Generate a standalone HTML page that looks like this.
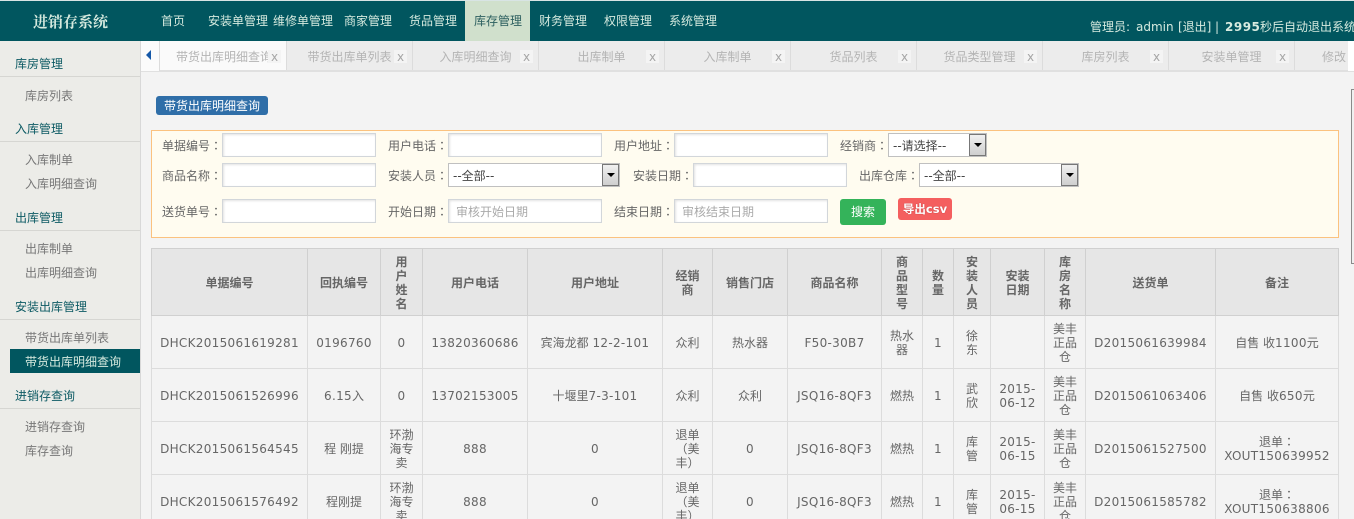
<!DOCTYPE html>
<html style="height:519px;overflow:hidden"><head><meta charset="utf-8">
<style>
html,body{margin:0;padding:0}
body{width:1354px;height:519px;overflow:hidden;position:relative;background:#f3f3f3;font:12px/14px "DejaVu Sans","Noto Sans CJK SC",sans-serif;color:#666}
#w{position:absolute;left:0;top:0;width:1354px;height:519px;overflow:hidden}
.a{position:absolute;white-space:nowrap}
#hd{left:0;top:0;width:1354px;height:41px;background:#01565f;border-top:1px solid #d8e4e4;box-sizing:border-box}
.n{top:14px;color:#d6eadf;line-height:14px}
#side{left:0;top:41px;width:140px;height:478px;background:#ecece8;border-right:1px solid #d8d8d8}
.g{left:15px;color:#0c5a63;margin-top:1px}
.l{left:0;width:140px;height:1px;background:#d6d6d2}
.i{left:25px;color:#777;margin-top:1px}
#tabs{left:141px;top:41px;width:1213px;height:29px;background:#ececec;border-bottom:2px solid #e0e0e0}
.t{top:41px;height:29px;width:125px;border-right:1px solid #dcdcdc;text-align:center;line-height:32px;color:#b4b4b4;overflow:hidden}
.x{top:50px;width:13px;height:13px;background:#f4f4f4;color:#a6a6a6;font:12px/14px "DejaVu Sans",sans-serif;text-align:center;overflow:hidden}
.lb{color:#666;margin-top:1px}
.c{font-family:"Noto Sans CJK TC",sans-serif}
.in{height:22px;width:152px;background:#fff;border:1px solid #d2d6da;box-shadow:inset 1px 1px 2px #e2e2e2;color:#aaa;line-height:25px}
.sel{height:22px;background:#fff;border:1px solid #c0c0c0;color:#444;line-height:25px}
.sel span{position:absolute;left:4px;top:0}
.sb{position:absolute;right:0;top:0;width:15px;height:20px;border:1px solid #777;background:linear-gradient(#f0f0f0,#cfcfcf);box-sizing:content-box}
.sb:after{content:"";position:absolute;left:4px;top:8px;border:4px solid transparent;border-top:4px solid #000;border-bottom:0}
table{position:absolute;left:151px;top:248px;width:1187px;table-layout:fixed;border-collapse:collapse}
th,td{border:1px solid #dcdcdc;text-align:center;padding:1px 0 0;overflow:hidden;white-space:nowrap;line-height:14px;color:#666}
th{background:#e6e6e6;border-color:#d0d0d0;height:65px;font-weight:bold;color:#666}
td{height:51px;background:#f3f3f3}
i{font-style:normal;letter-spacing:.3px}
</style></head><body><div id="w">
<div class="a" id="hd"></div>
<div class="a" style="left:33px;top:13px;font-size:15px;line-height:18px;font-weight:bold;color:#d6eadf;font-family:'Noto Serif CJK SC',serif">进销存系统</div>
<div class="a n" style="left:161px">首页</div>
<div class="a n" style="left:208px">安装单管理</div>
<div class="a n" style="left:273px">维修单管理</div>
<div class="a n" style="left:344px">商家管理</div>
<div class="a n" style="left:409px">货品管理</div>
<div class="a" style="left:465px;top:1px;width:65px;height:40px;background:#d0e0cc"></div>
<div class="a n" style="left:474px;color:#2c5f5f">库存管理</div>
<div class="a n" style="left:539px">财务管理</div>
<div class="a n" style="left:604px">权限管理</div>
<div class="a n" style="left:669px">系统管理</div>
<div class="a n" style="left:1090px;top:20px">管理员:</div>
<div class="a n" style="left:1136px;top:20px">admin</div>
<div class="a n" style="left:1178px;top:20px">[退出]</div>
<div class="a n" style="left:1215px;top:20px">|</div>
<div class="a n" style="left:1225px;top:20px;font-weight:bold;letter-spacing:.5px">2995</div>
<div class="a n" style="left:1260px;top:20px">秒后自动退出系统</div>

<div class="a" id="side"></div>
<div class="a g" style="top:56px">库房管理</div><div class="a l" style="top:76px"></div>
<div class="a i" style="top:88px">库房列表</div>
<div class="a g" style="top:121px">入库管理</div><div class="a l" style="top:141px"></div>
<div class="a i" style="top:152px">入库制单</div>
<div class="a i" style="top:176px">入库明细查询</div>
<div class="a g" style="top:210px">出库管理</div><div class="a l" style="top:230px"></div>
<div class="a i" style="top:241px">出库制单</div>
<div class="a i" style="top:265px">出库明细查询</div>
<div class="a g" style="top:299px">安装出库管理</div><div class="a l" style="top:319px"></div>
<div class="a i" style="top:330px">带货出库单列表</div>
<div class="a" style="left:10px;top:349px;width:130px;height:24px;background:#01565f"></div>
<div class="a i" style="top:354px;color:#d6eadf">带货出库明细查询</div>
<div class="a g" style="top:388px">进销存查询</div><div class="a l" style="top:408px"></div>
<div class="a i" style="top:419px">进销存查询</div>
<div class="a i" style="top:443px">库存查询</div>

<div class="a" id="tabs"></div>
<div class="a" style="left:141px;top:41px;width:19px;height:30px;background:#fbfbfb;border-right:1px solid #dcdcdc;box-sizing:border-box"></div>
<div class="a" style="left:146px;top:50px;border:5px solid transparent;border-right:5px solid #1558a8;border-left:0"></div>
<div class="a t" style="left:160px;width:126px;background:#fafafa;text-align:left"><span style="position:absolute;left:16px;width:92px;overflow:hidden">带货出库明细查询</span></div>
<div class="a t" style="left:287px">带货出库单列表</div>
<div class="a t" style="left:413px">入库明细查询</div>
<div class="a t" style="left:539px">出库制单</div>
<div class="a t" style="left:665px">入库制单</div>
<div class="a t" style="left:791px">货品列表</div>
<div class="a t" style="left:917px">货品类型管理</div>
<div class="a t" style="left:1043px">库房列表</div>
<div class="a t" style="left:1169px">安装单管理</div>
<div class="a t" style="left:1295px;width:53px;text-align:left;border:0"><span style="position:absolute;left:27px">修改</span></div>
<div class="a" style="left:1348px;top:41px;width:6px;height:30px;background:#fff"></div>
<div class="a x" style="left:268px">x</div><div class="a x" style="left:394px">x</div><div class="a x" style="left:520px">x</div>
<div class="a x" style="left:646px">x</div><div class="a x" style="left:772px">x</div><div class="a x" style="left:898px">x</div>
<div class="a x" style="left:1024px">x</div><div class="a x" style="left:1150px">x</div><div class="a x" style="left:1276px">x</div>

<div class="a" style="left:1351px;top:89px;width:3px;height:175px;background:#f0f0f0;border:1px solid #8a8a8a;border-right:0;box-sizing:border-box"></div>

<div class="a" style="left:156px;top:96px;width:112px;height:19px;background:#2f6ea8;border-radius:3px;color:#fff;text-align:center;line-height:20px">带货出库明细查询</div>

<div class="a" style="left:151px;top:130px;width:1186px;height:106px;background:#fffcf0;border:1px solid #fbc27f"></div>
<div class="a lb" style="left:162px;top:138px">单据编号<span class="c">：</span></div><div class="a in" style="left:222px;top:133px"></div>
<div class="a lb" style="left:388px;top:138px">用户电话<span class="c">：</span></div><div class="a in" style="left:448px;top:133px"></div>
<div class="a lb" style="left:614px;top:138px">用户地址<span class="c">：</span></div><div class="a in" style="left:674px;top:133px"></div>
<div class="a lb" style="left:840px;top:138px">经销商<span class="c">：</span></div>
<div class="a sel" style="left:888px;top:133px;width:97px"><span>--请选择--</span><div class="sb"></div></div>
<div class="a lb" style="left:162px;top:168px">商品名称<span class="c">：</span></div><div class="a in" style="left:222px;top:163px"></div>
<div class="a lb" style="left:388px;top:168px">安装人员<span class="c">：</span></div>
<div class="a sel" style="left:448px;top:163px;width:170px"><span>--全部--</span><div class="sb"></div></div>
<div class="a lb" style="left:633px;top:168px">安装日期<span class="c">：</span></div><div class="a in" style="left:693px;top:163px"></div>
<div class="a lb" style="left:859px;top:168px">出库仓库<span class="c">：</span></div>
<div class="a sel" style="left:919px;top:163px;width:158px"><span>--全部--</span><div class="sb"></div></div>
<div class="a lb" style="left:162px;top:204px">送货单号<span class="c">：</span></div><div class="a in" style="left:222px;top:199px"></div>
<div class="a lb" style="left:388px;top:204px">开始日期<span class="c">：</span></div><div class="a in" style="left:448px;top:199px"><span style="margin-left:7px">审核开始日期</span></div>
<div class="a lb" style="left:614px;top:204px">结束日期<span class="c">：</span></div><div class="a in" style="left:674px;top:199px"><span style="margin-left:7px">审核结束日期</span></div>
<div class="a" style="left:840px;top:199px;width:46px;height:26px;background:#34b35a;border-radius:3px;color:#fff;text-align:center;line-height:27px">搜索</div>
<div class="a" style="left:898px;top:198px;width:54px;height:22px;background:#f45f5f;border-radius:3px;color:#fff;text-align:center;line-height:22px;font-weight:bold;font-size:11.5px;text-shadow:0 0 1px #a33">导出csv</div>

<table>
<colgroup><col style="width:156px"><col style="width:73px"><col style="width:42px"><col style="width:105px"><col style="width:135px"><col style="width:50px"><col style="width:75px"><col style="width:94px"><col style="width:41px"><col style="width:31px"><col style="width:37px"><col style="width:54px"><col style="width:41px"><col style="width:130px"><col style="width:123px"></colgroup>
<tr><th>单据编号</th><th>回执编号</th><th>用<br>户<br>姓<br>名</th><th>用户电话</th><th>用户地址</th><th>经销<br>商</th><th>销售门店</th><th>商品名称</th><th>商<br>品<br>型<br>号</th><th>数<br>量</th><th>安<br>装<br>人<br>员</th><th>安装<br>日期</th><th>库<br>房<br>名<br>称</th><th>送货单</th><th>备注</th></tr>
<tr><td><i>DHCK2015061619281</i></td><td><i>0196760</i></td><td><i>0</i></td><td><i>13820360686</i></td><td>宾海龙都 <i>12-2-101</i></td><td>众利</td><td>热水器</td><td><i>F50-30B7</i></td><td>热水<br>器</td><td><i>1</i></td><td>徐<br>东</td><td></td><td>美丰<br>正品<br>仓</td><td><i>D2015061639984</i></td><td>自售 收<i>1100</i>元</td></tr>
<tr><td><i>DHCK2015061526996</i></td><td><i>6.15</i>入</td><td><i>0</i></td><td><i>13702153005</i></td><td>十堰里<i>7-3-101</i></td><td>众利</td><td>众利</td><td><i>JSQ16-8QF3</i></td><td>燃热</td><td><i>1</i></td><td>武<br>欣</td><td><i>2015-<br>06-12</i></td><td>美丰<br>正品<br>仓</td><td><i>D2015061063406</i></td><td>自售 收<i>650</i>元</td></tr>
<tr><td><i>DHCK2015061564545</i></td><td>程 刚提</td><td>环渤<br>海专<br>卖</td><td><i>888</i></td><td><i>0</i></td><td>退单<br>（美<br>丰）</td><td><i>0</i></td><td><i>JSQ16-8QF3</i></td><td>燃热</td><td><i>1</i></td><td>库<br>管</td><td><i>2015-<br>06-15</i></td><td>美丰<br>正品<br>仓</td><td><i>D2015061527500</i></td><td>退单<span class="c">：</span><br><i>XOUT150639952</i></td></tr>
<tr><td><i>DHCK2015061576492</i></td><td>程刚提</td><td>环渤<br>海专<br>卖</td><td><i>888</i></td><td><i>0</i></td><td>退单<br>（美<br>丰）</td><td><i>0</i></td><td><i>JSQ16-8QF3</i></td><td>燃热</td><td><i>1</i></td><td>库<br>管</td><td><i>2015-<br>06-15</i></td><td>美丰<br>正品<br>仓</td><td><i>D2015061585782</i></td><td>退单<span class="c">：</span><br><i>XOUT150638806</i></td></tr>
</table>
</div></body></html>
